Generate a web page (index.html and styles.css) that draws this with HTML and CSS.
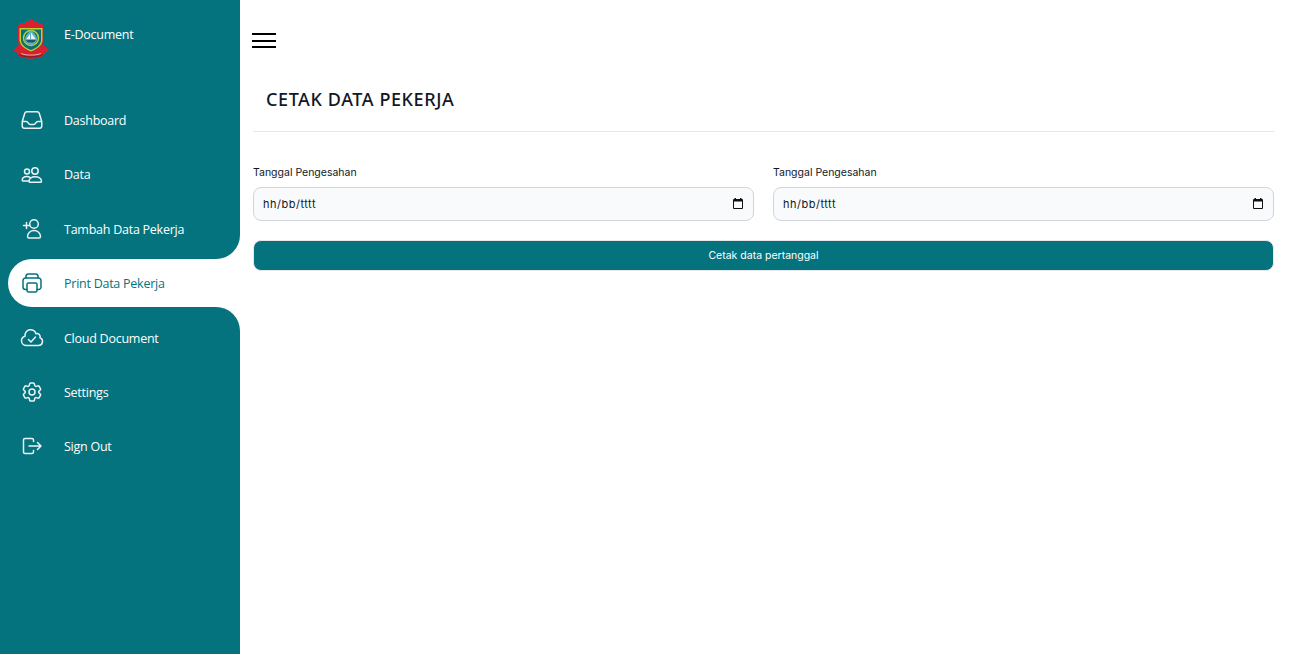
FILE: index.html
```html
<!DOCTYPE html>
<html lang="id">
<head>
<meta charset="utf-8">
<title>E-Document</title>
<link rel="stylesheet" href="styles.css">
</head>
<body>
<div class="app">
  <aside class="sidebar">
    <div class="group group-top">
      <div class="brand">
        <svg class="logo" viewBox="0 0 36 42" aria-hidden="true">
          <path fill="#d8202f" d="M6 8Q6 5 9 5h3V3h4V1h4v2h4v2h3q3 0 3 3v15c0 5-3 9-7 12l-5 1-5-1c-4-3-7-7-8-12V8z"/>
          <path fill="#d8202f" d="M6 26 0 33l3 .5L6 38c7 3.500 17 3.500 24 0l3-4.500 3-.5-6-7c-3 5-7 8-12 8s-9-3-12-8z"/>
          <path fill="#8c1c2a" d="M6 36c7 3 17 3 24 0l-.5 1.500c-7 3-16 3-23 0z"/>
          <path fill="#e8a6a6" d="M8 35c6 2 14 2 20 0v1c-6 2-14 2-20 0z"/>
          <path fill="#b7cf3a" d="M6.500 10h23v12c0 5-5 9-11.500 11.500C11.500 31 6.500 27 6.500 22z"/>
          <path fill="#0a6f70" d="M8 11.500h20V22c0 4.500-4.500 8-10 10-5.500-2-10-5.500-10-10z"/>
          <circle cx="18" cy="20" r="7.500" fill="none" stroke="#b7cf3a" stroke-width="1.500"/>
          <path fill="#5fb3c9" d="M18 12c3 3 6 6 6 9a6 6 0 0 1-12 0c0-3 3-6 6-9z"/>
          <path fill="#eef4f6" d="M18 14.500v6.500h4.500zM17 16v5h-3.500z"/>
          <path fill="#27506d" d="M13 22h10l-2 2.500h-6z"/>
        </svg>
        <span class="brand-name">E-Document</span>
      </div>
      <nav class="menu">
        <a class="item" href="#">
          <svg class="icon" viewBox="0 0 24 24"><path d="M2.250 13.500h3.860a2.250 2.250 0 0 1 2.012 1.244l.256.512a2.250 2.250 0 0 0 2.013 1.244h3.218a2.250 2.250 0 0 0 2.013-1.244l.256-.512a2.250 2.250 0 0 1 2.013-1.244h3.859m-19.500.338V18a2.250 2.250 0 0 0 2.250 2.250h15A2.250 2.250 0 0 0 21.750 18v-4.162c0-.224-.034-.447-.1-.661L19.240 5.338a2.250 2.250 0 0 0-2.150-1.588H6.911a2.250 2.250 0 0 0-2.150 1.588L2.350 13.177a2.250 2.250 0 0 0-.1.661Z"/></svg>
          <span>Dashboard</span>
        </a>
        <a class="item" href="#">
          <svg class="icon" viewBox="0 0 24 24"><circle cx="7" cy="8.500" r="2.500"/><circle cx="15" cy="8" r="3.200"/><path d="M9 18.500c0-3 2.500-4.800 6-4.800s6.500 1.800 6.500 4.800c0 .5-.4.8-1 .8H10c-.6 0-1-.3-1-.8zM10 14.300c-.9-.6-1.900-.9-3-.9-2.700 0-4.800 1.500-4.800 3.800 0 .5.300.8 1 .8H9"/></svg>
          <span>Data</span>
        </a>
        <a class="item" href="#">
          <svg class="icon" viewBox="0 0 24 24"><path d="M6.500 5.500v6M3.500 8.500h6"/><circle cx="14" cy="7" r="4.300"/><path d="M7.500 19.500c0-3.500 3-6 6.500-6s6.500 2.500 6.500 6c0 1-.5 1.500-1.500 1.500H9c-1 0-1.500-.5-1.500-1.500z"/></svg>
          <span>Tambah Data Pekerja</span>
        </a>
      </nav>
    </div>
    <div class="group-active">
      <a class="item item-active" href="#">
        <svg class="icon" viewBox="0 0 24 24"><path d="M6 7V5.500a2.500 2.500 0 0 1 2.500-2.500h7A2.500 2.500 0 0 1 18 5.500V7"/><path d="M7 18.500H5.500A2.500 2.500 0 0 1 3 16V9.500A2.500 2.500 0 0 1 5.500 7h13A2.500 2.500 0 0 1 21 9.500V16a2.500 2.500 0 0 1-2.500 2.500H17"/><rect x="7" y="12" width="10" height="9" rx="1.500"/></svg>
        <span>Print Data Pekerja</span>
      </a>
    </div>
    <div class="group group-bottom">
      <nav class="menu menu-tight">
        <a class="item" href="#">
          <svg class="icon" viewBox="0 0 24 24"><path d="M1.500 15a4.800 4.800 0 0 0 4.800 4.500H18.500a4 4 0 0 0 1.500-7.700 3.200 3.200 0 0 0-4-4.100 5.600 5.600 0 0 0-10.900 2.500A4.800 4.800 0 0 0 1.500 15Z"/><path d="M8.500 13.500l2.500 2.500 4.500-5"/></svg>
          <span>Cloud Document</span>
        </a>
        <a class="item" href="#">
          <svg class="icon" viewBox="0 0 24 24"><path d="M9.594 3.940c.09-.542.56-.94 1.110-.94h2.593c.55 0 1.020.398 1.110.94l.213 1.281c.063.374.313.686.645.870.074.04.147.083.22.127.325.196.72.257 1.075.124l1.217-.456a1.125 1.125 0 0 1 1.370.49l1.296 2.247a1.125 1.125 0 0 1-.26 1.431l-1.003.827c-.293.241-.438.613-.43.992a7.723 7.723 0 0 1 0 .255c-.008.378.137.75.43.991l1.004.827c.424.35.534.955.26 1.430l-1.298 2.247a1.125 1.125 0 0 1-1.369.491l-1.217-.456c-.355-.133-.75-.072-1.076.124a6.470 6.470 0 0 1-.22.128c-.331.183-.581.495-.644.869l-.213 1.281c-.09.543-.56.94-1.110.94h-2.594c-.55 0-1.019-.398-1.110-.94l-.213-1.281c-.062-.374-.312-.686-.644-.87a6.520 6.520 0 0 1-.22-.127c-.325-.196-.72-.257-1.076-.124l-1.217.456a1.125 1.125 0 0 1-1.369-.49l-1.297-2.247a1.125 1.125 0 0 1 .26-1.431l1.004-.827c.292-.24.437-.613.43-.991a6.932 6.932 0 0 1 0-.255c.007-.38-.138-.751-.43-.992l-1.004-.827a1.125 1.125 0 0 1-.26-1.430l1.297-2.247a1.125 1.125 0 0 1 1.370-.491l1.216.456c.356.133.751.072 1.076-.124.072-.044.146-.086.22-.128.332-.183.582-.495.644-.869l.214-1.280Z"/><path d="M15 12a3 3 0 1 1-6 0 3 3 0 0 1 6 0Z"/></svg>
          <span>Settings</span>
        </a>
        <a class="item" href="#">
          <svg class="icon" viewBox="0 0 24 24"><path d="M13.500 7.500V6a1.500 1.500 0 0 0-1.500-1.500H5A1.500 1.500 0 0 0 3.500 6v12A1.500 1.500 0 0 0 5 19.500h7a1.500 1.500 0 0 0 1.500-1.500v-1.500"/><path d="M9 12h12m-3.500-3.500L21 12l-3.500 3.500"/></svg>
          <span>Sign Out</span>
        </a>
      </nav>
    </div>
  </aside>
  <main class="main">
    <button class="burger" type="button" aria-label="Menu"><i></i><i></i><i></i></button>
    <h1 class="title">CETAK DATA PEKERJA</h1>
    <form class="form">
      <div class="fields">
        <div class="field">
          <label class="label">Tanggal Pengesahan</label>
          <div class="date">
            <input class="date-input" type="text" placeholder="hh/bb/tttt">
            <svg class="cal" viewBox="0 0 10 11"><path d="M1.500 0h1.500v1h4V0h1.500v1H9a1 1 0 0 1 1 1v8a1 1 0 0 1-1 1H1a1 1 0 0 1-1-1V2a1 1 0 0 1 1-1h.5zM1 3.500V10h8V3.500z"/></svg>
          </div>
        </div>
        <div class="field">
          <label class="label">Tanggal Pengesahan</label>
          <div class="date">
            <input class="date-input" type="text" placeholder="hh/bb/tttt">
            <svg class="cal" viewBox="0 0 10 11"><path d="M1.500 0h1.500v1h4V0h1.500v1H9a1 1 0 0 1 1 1v8a1 1 0 0 1-1 1H1a1 1 0 0 1-1-1V2a1 1 0 0 1 1-1h.5zM1 3.500V10h8V3.500z"/></svg>
          </div>
        </div>
      </div>
      <button class="submit" type="button">Cetak data pertanggal</button>
    </form>
  </main>
</div>
</body>
</html>
```
FILE: styles.css
```css
* { box-sizing: border-box; }
html, body { margin: 0; height: 100%; }
body { background: #fff; font-family: "Open Sans", "Noto Sans", sans-serif; overflow: hidden; }
.app { display: flex; height: 654px; }

.sidebar { width: 240px; flex: none; display: flex; flex-direction: column; background: #fff; }
.group { background: #04737e; }
.group-top { height: 259px; border-bottom-right-radius: 24px; padding-top: 18px; }
.group-bottom { flex: 1; border-top-right-radius: 24px; padding-top: 7px; }
.group-active { background: #04737e; padding-left: 8px; }

.brand { display: flex; align-items: flex-start; height: 78px; padding-left: 13px; }
.logo { width: 36px; height: 42px; flex: none; }
.brand-name { margin: 8px 0 0 15px; color: #fff; font-size: 12.500px; letter-spacing: -.25px; line-height: 18px; }

.menu { display: flex; flex-direction: column; gap: 6.500px; }
.menu-tight { gap: 6px; }
.item { display: flex; align-items: center; height: 48px; padding-left: 20px; color: #fff; font-size: 12.500px; letter-spacing: -.25px; text-decoration: none; }
.item .icon { width: 24px; height: 24px; flex: none; margin-right: 20px; fill: none; stroke: #fff; stroke-width: 1.500; stroke-linecap: round; stroke-linejoin: round; opacity: .92; }
.item-active { padding-left: 12px; background: #fff; color: #04737e; border-radius: 24px 0 0 24px; }
.item-active .icon { stroke: #04737e; opacity: 1; }

.main { flex: 1; min-width: 0; padding: 33px 25px 0 13px; }
.burger { display: flex; flex-direction: column; gap: 4.500px; width: 24px; margin-left: -1px; padding: 0; border: 0; background: none; }
.burger i { display: block; height: 2px; background: #000; }
.title { margin: 39px 0 0; padding: 0 13px 19px; border-bottom: 1px solid #e5e7eb; color: #111827; font-family: "Noto Sans", "Open Sans", sans-serif; font-size: 18px; line-height: 25px; font-weight: 500; letter-spacing: .6px; }

.form { display: flex; flex-direction: column; gap: 19px; padding-top: 33px; }
.fields { display: grid; grid-template-columns: 1fr 1fr; gap: 19px; }
.field { display: flex; flex-direction: column; gap: 6px; }
.label { color: #111827; font-family: Inter, sans-serif; font-size: 10.500px; line-height: 16px; }
.date { display: flex; align-items: center; height: 34px; padding: 0 10px 0 9px; background: #f9fafb; border: 1px solid #d1d5db; border-radius: 8px; }
.date-input { flex: 1; min-width: 0; padding: 0; border: 0; outline: 0; background: transparent; font-family: Inter, sans-serif; font-size: 11px; letter-spacing: .5px; color: #111827; }
.date-input::placeholder { color: #111827; opacity: 1; }
.cal { width: 10px; height: 11px; flex: none; fill: #111; margin-top: -2px; }
.submit { height: 31px; padding: 0; border: 1px solid #e5e7eb; border-radius: 8px; background: #04737e; color: #fff; font-family: Inter, sans-serif; font-size: 10.500px; font-weight: 400; }
```
